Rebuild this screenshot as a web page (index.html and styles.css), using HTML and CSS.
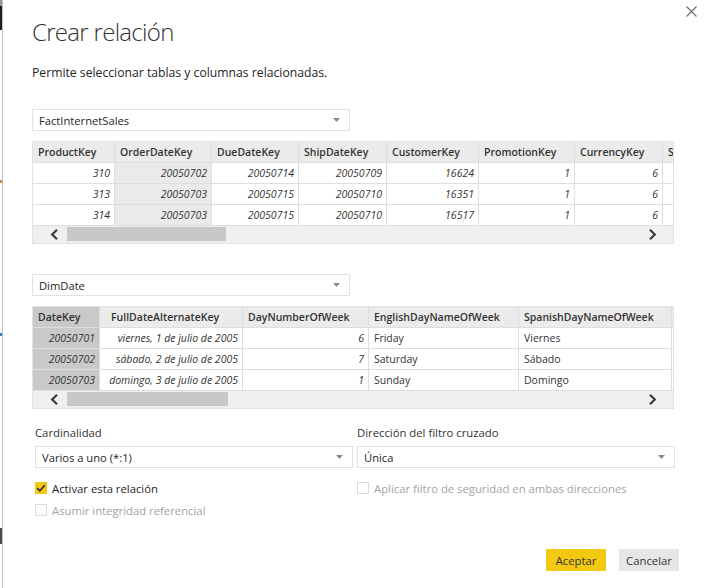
FILE: index.html
```html
<!DOCTYPE html>
<html lang="es">
<head>
<meta charset="utf-8">
<title>Crear relación</title>
<link rel="stylesheet" href="styles.css">
</head>
<body>
<div class="screen">
  <div class="backdrop">
    <span class="bd bd-top"></span>
    <span class="bd bd-gap1"></span>
    <span class="bd bd-bit bd-orange"></span>
    <span class="bd bd-gap2"></span>
    <span class="bd bd-bit bd-blue"></span>
    <span class="bd bd-gap3"></span>
    <span class="bd bd-bottom"></span>
  </div>
  <div class="dialog">
    <button class="close" type="button" aria-label="Cerrar">
      <svg width="11" height="11" viewBox="0 0 11 11"><path d="M0.5 0.5L10.5 10.5M10.5 0.5L0.5 10.5" stroke="#6b6b6b" stroke-width="1.1" fill="none"/></svg>
    </button>
    <h1 class="title">Crear relación</h1>
    <p class="subtitle">Permite seleccionar tablas y columnas relacionadas.</p>

    <div class="select select-table">
      <span>FactInternetSales</span>
      <svg class="caret" width="7" height="4" viewBox="0 0 7 4"><path d="M0 0H7L3.5 4Z" fill="#8a8a8a"/></svg>
    </div>
    <div class="grid">
      <table class="data t1">
        <colgroup>
          <col class="w82"><col class="w97"><col class="w87"><col class="w88"><col class="w92"><col class="w96"><col class="w88"><col class="w10">
        </colgroup>
        <thead>
          <tr><th>ProductKey</th><th>OrderDateKey</th><th>DueDateKey</th><th>ShipDateKey</th><th>CustomerKey</th><th>PromotionKey</th><th>CurrencyKey</th><th class="clip">S</th></tr>
        </thead>
        <tbody>
          <tr><td class="num">310</td><td class="num sel">20050702</td><td class="num">20050714</td><td class="num">20050709</td><td class="num">16624</td><td class="num">1</td><td class="num">6</td><td class="clip"></td></tr>
          <tr><td class="num">313</td><td class="num sel">20050703</td><td class="num">20050715</td><td class="num">20050710</td><td class="num">16351</td><td class="num">1</td><td class="num">6</td><td class="clip"></td></tr>
          <tr><td class="num">314</td><td class="num sel">20050703</td><td class="num">20050715</td><td class="num">20050710</td><td class="num">16517</td><td class="num">1</td><td class="num">6</td><td class="clip"></td></tr>
        </tbody>
      </table>
      <div class="hscroll">
        <svg class="arrow arrow-left" width="9" height="11" viewBox="0 0 9 11"><path d="M7 0.8L2.2 5.5L7 10.2" stroke="#3c3c3c" stroke-width="2.2" fill="none"/></svg>
        <span class="thumb thumb1"></span>
        <svg class="arrow arrow-right" width="9" height="11" viewBox="0 0 9 11"><path d="M2 0.8L6.8 5.5L2 10.2" stroke="#3c3c3c" stroke-width="2.2" fill="none"/></svg>
      </div>
    </div>

    <div class="select select-table select-second">
      <span>DimDate</span>
      <svg class="caret" width="7" height="4" viewBox="0 0 7 4"><path d="M0 0H7L3.5 4Z" fill="#8a8a8a"/></svg>
    </div>
    <div class="grid">
      <table class="data t2">
        <colgroup>
          <col class="w67"><col class="w143"><col class="w126"><col class="w150"><col class="w153"><col class="w1">
        </colgroup>
        <thead>
          <tr><th class="sel2">DateKey</th><th class="th-wide">FullDateAlternateKey</th><th>DayNumberOfWeek</th><th>EnglishDayNameOfWeek</th><th>SpanishDayNameOfWeek</th><th class="clip"></th></tr>
        </thead>
        <tbody>
          <tr><td class="num sel2">20050701</td><td class="num">viernes, 1 de julio de 2005</td><td class="num">6</td><td class="txt">Friday</td><td class="txt">Viernes</td><td class="clip"></td></tr>
          <tr><td class="num sel2">20050702</td><td class="num">sábado, 2 de julio de 2005</td><td class="num">7</td><td class="txt">Saturday</td><td class="txt">Sábado</td><td class="clip"></td></tr>
          <tr><td class="num sel2">20050703</td><td class="num">domingo, 3 de julio de 2005</td><td class="num">1</td><td class="txt">Sunday</td><td class="txt">Domingo</td><td class="clip"></td></tr>
        </tbody>
      </table>
      <div class="hscroll">
        <svg class="arrow arrow-left" width="9" height="11" viewBox="0 0 9 11"><path d="M7 0.8L2.2 5.5L7 10.2" stroke="#3c3c3c" stroke-width="2.2" fill="none"/></svg>
        <span class="thumb thumb2"></span>
        <svg class="arrow arrow-right" width="9" height="11" viewBox="0 0 9 11"><path d="M2 0.8L6.8 5.5L2 10.2" stroke="#3c3c3c" stroke-width="2.2" fill="none"/></svg>
      </div>
    </div>

    <div class="options">
      <div class="col">
        <div class="label">Cardinalidad</div>
        <div class="select">
          <span>Varios a uno (*:1)</span>
          <svg class="caret" width="7" height="4" viewBox="0 0 7 4"><path d="M0 0H7L3.5 4Z" fill="#8a8a8a"/></svg>
        </div>
        <label class="check first">
          <span class="box on"><svg width="12" height="12" viewBox="0 0 12 12"><path d="M2.2 6.2L4.8 8.8L9.8 3.2" stroke="#2b2b2b" stroke-width="1.7" fill="none"/></svg></span>
          <span>Activar esta relación</span>
        </label>
        <label class="check second disabled">
          <span class="box"></span>
          <span>Asumir integridad referencial</span>
        </label>
      </div>
      <div class="col">
        <div class="label">Dirección del filtro cruzado</div>
        <div class="select">
          <span>Única</span>
          <svg class="caret" width="7" height="4" viewBox="0 0 7 4"><path d="M0 0H7L3.5 4Z" fill="#8a8a8a"/></svg>
        </div>
        <label class="check first disabled">
          <span class="box"></span>
          <span>Aplicar filtro de seguridad en ambas direcciones</span>
        </label>
      </div>
    </div>

    <div class="actions">
      <button class="btn primary" type="button">Aceptar</button>
      <button class="btn" type="button">Cancelar</button>
    </div>
  </div>
</div>
</body>
</html>
```

FILE: styles.css
```css
* { box-sizing: border-box; }
html, body { margin: 0; padding: 0; background: #fff; }
body {
  font-family: "Open Sans", "Noto Sans", "DejaVu Sans", sans-serif;
  font-size: 11.3px;
  color: #333;
}
.screen { display: flex; width: 706px; height: 588px; overflow: hidden; }

.backdrop { width: 2px; display: flex; flex-direction: column; flex: none; }
.bd { display: block; width: 2px; }
.bd-top { height: 30px; background: linear-gradient(#9a9a9a 0 6px, #1e1e1e 6px); }
.bd-gap1 { height: 150px; }
.bd-bit { height: 3px; }
.bd-orange { background: #c98a3a; }
.bd-gap2 { height: 150px; }
.bd-blue { background: #3f78c4; }
.bd-gap3 { height: 192px; }
.bd-bottom { height: 16px; background: #4a4a4a; }

.dialog {
  position: relative;
  flex: 1;
  border-left: 1px solid #c2c2c2;
  padding-left: 29px;
}
.close {
  position: absolute;
  top: 6px;
  right: 9px;
  width: 11px;
  height: 11px;
  padding: 0;
  border: 0;
  background: none;
  display: block;
}
.close svg { display: block; }

.title {
  margin: 16px 0 0;
  font-size: 24px;
  line-height: 32px;
  font-weight: 300;
  letter-spacing: -0.7px;
  color: #333;
}
.subtitle {
  margin: 17px 0 0;
  font-size: 12.2px;
  line-height: 16px;
  color: #252525;
}

.select {
  display: flex;
  align-items: center;
  justify-content: space-between;
  height: 22px;
  border: 1px solid #e0e0e0;
  padding: 0 9px 0 6px;
  font-size: 11.2px;
  color: #252525;
  background: #fff;
}
.caret { display: block; flex: none; }
.select-table { width: 318px; margin-top: 28px; }
.select-second { margin-top: 30px; }

.grid {
  width: 642px;
  margin-top: 10px;
  border: 1px solid #e2e2e2;
  overflow: hidden;
}
.data {
  table-layout: fixed;
  border-collapse: separate;
  border-spacing: 0;
  font-size: 10.5px;
  color: #333;
}
.t1 { width: 640px; }
.t2 { width: 640px; }
.w82 { width: 82px; } .w97 { width: 97px; } .w87 { width: 87px; } .w88 { width: 88px; }
.w92 { width: 92px; } .w96 { width: 96px; } .w10 { width: 10px; } .w1 { width: 1px; }
.w67 { width: 67px; } .w143 { width: 143px; } .w126 { width: 126px; } .w150 { width: 150px; } .w153 { width: 153px; }

.data th, .data td {
  height: 21px;
  line-height: 20px;
  padding: 0 4px 0 5px;
  border-right: 1px solid #dedede;
  border-bottom: 1px solid #dedede;
  white-space: nowrap;
  overflow: hidden;
}
.data th.clip, .data td.clip { padding: 0 0 0 5px; border-right: 0; text-overflow: clip; }
.data th {
  background: #ebebeb;
  font-weight: 600;
  text-align: left;
}
.data th.th-wide { padding-left: 11px; }
.data td { background: #fff; }
.data td.num { text-align: right; font-style: italic; }
.data td.txt { text-align: left; }
.data td.sel { background: #eaeaea; }
.data .sel2, .data td.sel2 { background: #c9c9c9; }

.hscroll {
  display: flex;
  align-items: center;
  height: 17px;
  background: #efefef;
}
.arrow { display: block; flex: none; }
.arrow-left { margin-left: 17px; }
.arrow-right { margin-left: auto; margin-right: 16px; }
.thumb { display: block; height: 14px; background: #c8c8c8; margin-left: 8px; align-self: flex-start; margin-top: 1px; }
.thumb1 { width: 159px; }
.thumb2 { width: 161px; }

.options {
  display: grid;
  grid-template-columns: 318px 318px;
  column-gap: 4px;
  margin: 16px 0 0 3px;
}
.col { display: flex; flex-direction: column; }
.label {
  font-size: 11.3px;
  line-height: 16px;
  color: #333;
  margin-bottom: 5px;
}
.check {
  display: flex;
  align-items: center;
  height: 16px;
  gap: 5px;
  font-size: 11.3px;
  color: #252525;
}
.check.first { margin-top: 12px; }
.check.second { margin-top: 6px; }
.check.disabled { color: #a3a3a3; }
.box {
  width: 12px;
  height: 12px;
  flex: none;
  border: 1px solid #dadada;
  background: #fff;
  display: block;
}
.box.on { background: #f2c811; border-color: #f2c811; }
.box svg { display: block; margin: -1px 0 0 -1px; }

.actions {
  display: flex;
  justify-content: flex-end;
  gap: 13px;
  margin-top: 31px;
  padding-right: 27px;
}
.btn {
  width: 60px;
  height: 22px;
  border: 0;
  padding: 0;
  font-family: inherit;
  font-size: 11.3px;
  color: #333;
  background: #e6e6e6;
}
.btn.primary { background: #f2c811; }
```
